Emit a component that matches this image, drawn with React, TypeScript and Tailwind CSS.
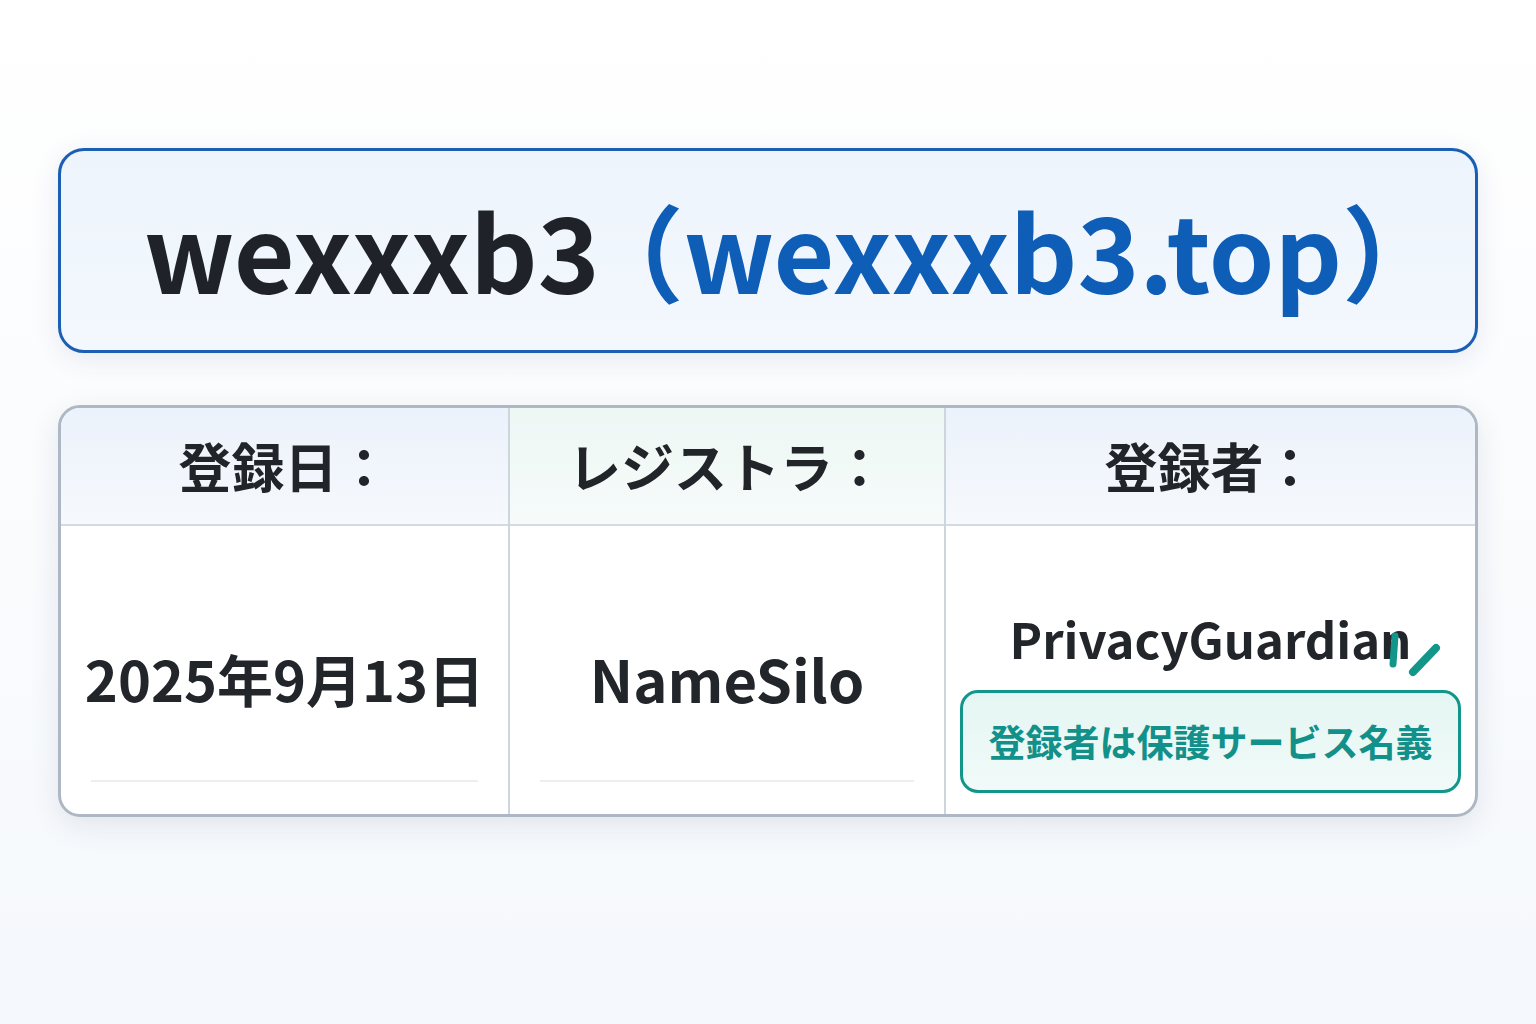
const font = { fontFamily: '"Noto Sans CJK JP", "Noto Sans", sans-serif' };

function HeaderCell({ label, tint }: { label: string; tint: "blue" | "green" }) {
  return (
    <div
      className={
        "flex h-[118px] items-center justify-center whitespace-nowrap border-b-2 border-[#d3dae3] text-[53px] font-bold text-[#212529] " +
        (tint === "green"
          ? "bg-gradient-to-b from-[#edf7f4] to-[#f6fbfa]"
          : "bg-gradient-to-b from-[#ecf2fb] to-[#f6f9fd]")
      }
    >
      {label}
    </div>
  );
}

function Slashes() {
  return (
    <svg
      aria-hidden
      width="64"
      height="48"
      viewBox="0 0 64 48"
      className="absolute -right-[32px] top-[18px]"
    >
      <line x1="15" y1="5" x2="13" y2="33" stroke="#13968a" strokeWidth="7" strokeLinecap="round" />
      <line x1="56" y1="17" x2="33" y2="41" stroke="#13968a" strokeWidth="8" strokeLinecap="round" />
    </svg>
  );
}

export default function App() {
  return (
    <div
      style={font}
      className="min-h-[1024px] bg-gradient-to-b from-[#ffffff] to-[#f5f8fc] px-[58px] pt-[148px]"
    >
      <div className="flex h-[205px] items-center justify-center rounded-[26px] border-[3px] border-[#1a5fb4] bg-gradient-to-b from-[#eef4fc] to-[#f3f8fe] shadow-[0_6px_28px_rgba(30,60,110,0.10)]">
        <h1 className="whitespace-nowrap pb-[4px] text-[105px] font-bold leading-none">
          <span className="mr-[-21px] text-[#1f2329]">wexxxb3</span>
          <span className="mr-[-55px] text-[#0e5db7]">（wexxxb3.top）</span>
        </h1>
      </div>

      <div className="mt-[52px] overflow-hidden rounded-[22px] border-[3px] border-[#aeb8c4] bg-white shadow-[0_8px_30px_rgba(30,50,90,0.10)]">
        <div className="grid grid-cols-[449px_436px_1fr]">
          <div className="border-r-2 border-[#cdd5df]">
            <HeaderCell label="登録日：" tint="blue" />
            <div className="flex h-[288px] flex-col px-[30px] pb-[32px]">
              <div className="flex flex-1 items-center justify-center whitespace-nowrap border-b-2 border-[#eceef1] pt-[50px] text-[56px] font-bold text-[#22262b]">
                2025年9月13日
              </div>
            </div>
          </div>

          <div className="border-r-2 border-[#cdd5df]">
            <HeaderCell label="レジストラ：" tint="green" />
            <div className="flex h-[288px] flex-col px-[30px] pb-[32px]">
              <div className="flex flex-1 items-center justify-center whitespace-nowrap border-b-2 border-[#eceef1] pt-[50px] text-[58px] font-bold text-[#22262b]">
                NameSilo
              </div>
            </div>
          </div>

          <div>
            <HeaderCell label="登録者：" tint="blue" />
            <div className="flex h-[287px] flex-col items-center justify-end px-[14px] pb-[20px]">
              <div className="relative whitespace-nowrap text-[49px] font-bold leading-none text-[#22262b]">
                PrivacyGuardian
                <Slashes />
              </div>
              <div className="mt-[28px] flex h-[103px] w-full items-center justify-center whitespace-nowrap rounded-[18px] border-[3px] border-[#13968a] bg-gradient-to-b from-[#e4f6f3] to-[#f1faf9] text-[37px] font-bold text-[#12908a]">
                登録者は保護サービス名義
              </div>
            </div>
          </div>
        </div>
      </div>
    </div>
  );
}
